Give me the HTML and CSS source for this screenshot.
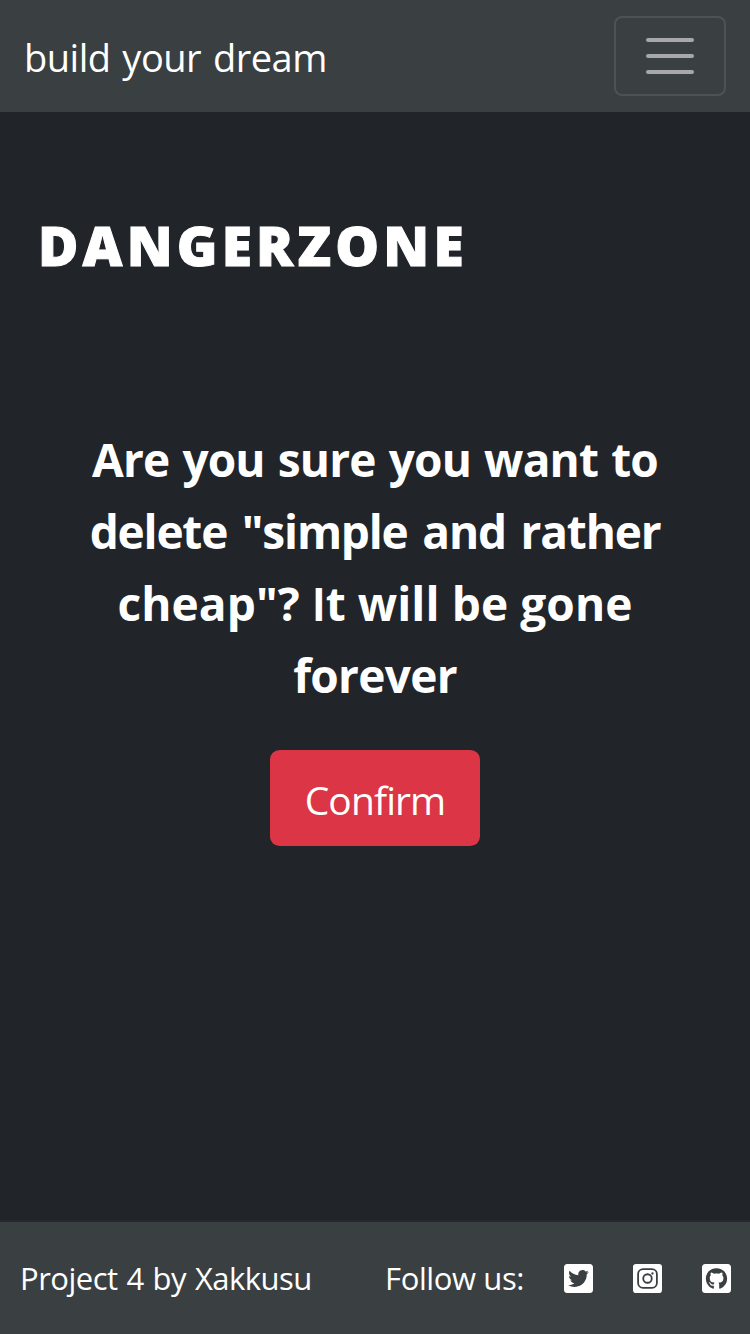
FILE: index.html
```html
<!DOCTYPE html>
<html lang="en">
<head>
<meta charset="utf-8">
<title>build your dream</title>
<link rel="stylesheet" href="styles.css">
</head>
<body>
<header class="navbar">
  <a class="brand">build your dream</a>
  <button class="toggler" aria-label="Toggle navigation">
    <svg width="60" height="60" viewBox="0 0 30 30"><path stroke="#fff" stroke-opacity=".55" stroke-linecap="round" stroke-width="2" d="M4 7h22M4 15h22M4 23h22"/></svg>
  </button>
</header>
<main class="content">
  <h1 class="title"><span>DANGERZONE</span></h1>
  <p class="question"><span class="l1">Are you sure you want to</span><br><span class="l2">delete "simple and rather</span><br><span class="l3">cheap"? <span class="cap">I</span>t will be gone</span><br><span class="l4">forever</span></p>
  <button class="confirm"><span>Confirm</span></button>
</main>
<footer class="footer">
  <span class="credit">Project 4 by Xakkusu</span>
  <div class="social">
    <span class="follow">Follow us:</span>
    <svg class="icon" viewBox="0 32 448 448"><path d="M400 32H48C21.5 32 0 53.5 0 80v352c0 26.5 21.5 48 48 48h352c26.500 0 48-21.500 48-48V80c0-26.500-21.500-48-48-48zm-48.900 158.800c.2 2.800.2 5.700.2 8.500 0 86.700-66 186.600-186.600 186.600-37.200 0-71.700-10.800-100.700-29.400 5.300.6 10.400.8 15.800.8 30.700 0 58.900-10.400 81.400-28-28.800-.6-53-19.500-61.300-45.500 10.100 1.500 19.200 1.500 29.600-1.200-30-6.100-52.500-32.500-52.500-64.400v-.8c8.700 4.900 18.900 7.900 29.600 8.300a65.447 65.447 0 0 1-29.200-54.600c0-12.200 3.200-23.400 8.900-33.100 32.300 39.800 80.800 65.800 135.200 68.600-9.300-44.500 24-80.600 64-80.600 18.900 0 35.900 7.900 47.900 20.700 14.800-2.800 29-8.300 41.600-15.800-4.900 15.200-15.200 28-28.800 36.100 13.200-1.400 26-5.100 37.800-10.200-8.900 13.100-20.100 24.700-32.900 34z"/></svg>
    <svg class="icon" viewBox="0 32 448 448"><rect y="32" width="448" height="448" rx="48"/><g class="cut"><rect x="79" y="111" width="290" height="290" rx="76"/><circle cx="224" cy="256" r="66"/></g><circle class="dot" cx="301" cy="179" r="18"/></svg>
    <svg class="icon" viewBox="0 32 448 448"><path d="M400 32H48C21.500 32 0 53.500 0 80v352c0 26.500 21.500 48 48 48h352c26.500 0 48-21.500 48-48V80c0-26.500-21.500-48-48-48zM277.300 415.700c-8.400 1.500-11.500-3.700-11.500-8 0-5.400.2-33 .2-55.300 0-15.600-5.200-25.500-11.300-30.700 37-4.100 76-9.200 76-73.100 0-18.200-6.500-27.300-17.100-39 1.700-4.300 7.400-22-1.700-45-13.900-4.300-45.700 17.900-45.700 17.900-13.200-3.700-27.500-5.600-41.600-5.600-14.100 0-28.400 1.900-41.600 5.600 0 0-31.800-22.200-45.700-17.900-9.100 22.900-3.500 40.600-1.700 45-10.600 11.700-15.600 20.800-15.600 39 0 63.600 37.300 69 74.300 73.100-4.800 4.300-9.100 11.700-10.600 22.300-9.500 4.300-33.800 11.700-48.300-13.900-9.100-15.800-25.500-17.100-25.500-17.100-16.200-.2-1.100 10.200-1.100 10.200 10.800 5 18.400 24.200 18.400 24.200 9.700 29.700 56.100 19.700 56.100 19.700 0 13.900.2 36.500.2 40.600 0 4.300-3 9.500-11.500 8-66-22.100-112.200-84.900-112.200-158.300 0-91.800 70.200-161.500 162-161.500S388 165.600 388 257.400c.1 73.400-44.700 136.300-110.700 158.300z"/></svg>
  </div>
</footer>
</body>
</html>
```
FILE: styles.css
```css
* { box-sizing: border-box; }
body {
  margin: 0;
  min-height: 1334px;
  display: flex;
  flex-direction: column;
  background: #212529;
  color: #fff;
  font-family: "Open Sans", "Noto Sans", sans-serif;
}
.navbar {
  height: 112px;
  padding: 0 24px;
  display: flex;
  align-items: center;
  justify-content: space-between;
  background: #3a3f42;
}
.brand { font-size: 38px; line-height: 60px; padding-top: 1px; letter-spacing: -0.5px; word-spacing: 2.5px; }
.toggler {
  width: 112px;
  height: 80px;
  padding: 0;
  display: flex;
  align-items: center;
  justify-content: center;
  background: none;
  border: 2px solid #4e5255;
  border-radius: 8px;
}
.toggler svg { width: 60px; height: 60px; }
.content {
  flex: 1;
  display: flex;
  flex-direction: column;
  align-items: center;
}
.title {
  align-self: flex-start;
  margin: 99px 0 0 38px;
  font-size: 55px;
  line-height: 68px;
  font-weight: 800;
  letter-spacing: 4.2px;
  -webkit-text-stroke: 1px #fff;
}
.question {
  margin: 144px 0 0;
  font-size: 46px;
  line-height: 72px;
  font-weight: 700;
  text-align: center;
  white-space: nowrap;
}
.l1 { letter-spacing: -0.85px; word-spacing: 2px; }
.l2 { letter-spacing: -1.2px; word-spacing: 4px; }
.l3 { letter-spacing: 0.1px; }
.l4 { letter-spacing: -0.7px; }
.cap { font-family: Lato, sans-serif; line-height: 0; }
.confirm {
  width: 210px;
  height: 96px;
  margin-top: 39px;
  padding: 2px 0 0;
  border: 0;
  border-radius: 9.6px;
  background: #dc3545;
  color: #fff;
  font-family: inherit;
  font-size: 39px;
  letter-spacing: -0.9px;
}
.footer {
  height: 114px;
  padding: 0 19px 0 20px;
  border-top: 2px solid #25292d;
  display: flex;
  align-items: center;
  justify-content: space-between;
  background: #3a3f42;
  font-size: 31px;
  white-space: nowrap;
}
.credit { letter-spacing: -0.5px; word-spacing: 1.3px; }
.follow { letter-spacing: -0.4px; }
.social { display: flex; align-items: center; gap: 40px; }
.icon { width: 29px; height: 29px; fill: #fff; }
.cut { fill: none; stroke: #3a3f42; stroke-width: 28; }
.dot { fill: #3a3f42; }
```
